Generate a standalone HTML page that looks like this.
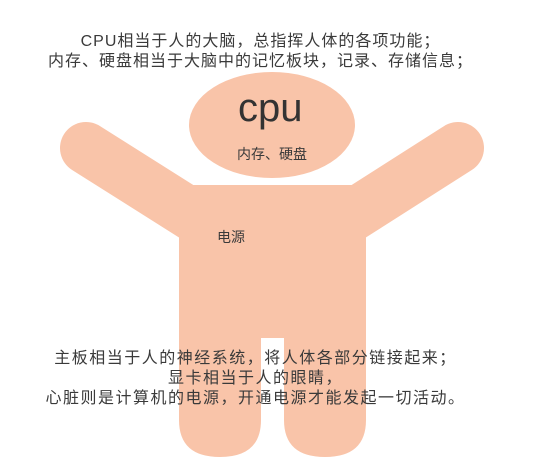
<!DOCTYPE html>
<html><head><meta charset="utf-8"><style>
html,body{margin:0;padding:0;background:#fff;}
body{width:533px;height:472px;position:relative;overflow:hidden;font-family:"Liberation Sans","Noto Sans CJK SC",sans-serif;color:#3a3a3a;}
.t{position:absolute;left:0;text-align:center;font-size:16px;letter-spacing:1px;line-height:20px;white-space:nowrap;}
.a{width:521px;}
.b{width:511px;letter-spacing:1.5px;}
</style></head><body>
<svg width="533" height="472" style="position:absolute;left:0;top:0">
<g fill="#f9c4a9" stroke="none">
<ellipse cx="272" cy="125" rx="83" ry="53"/>
<path d="M179 185 H366 V420 Q366 457 325 457 Q284 457 284 420 V338 H261 V420 Q261 457 220 457 Q179 457 179 420 Z"/>
</g>
<g stroke="#f9c4a9" stroke-width="52" stroke-linecap="round">
<line x1="86" y1="148" x2="200" y2="220"/>
<line x1="458" y1="148" x2="345" y2="220"/>
</g>
</svg>
<div class="t a" style="top:32px">CPU相当于人的大脑，总指挥人体的各项功能；</div>
<div class="t a" style="top:52px">内存、硬盘相当于大脑中的记忆板块，记录、存储信息；</div>
<div style="position:absolute;left:238px;top:86px;font-size:40px;color:#333;">cpu</div>
<div style="position:absolute;left:237px;top:144px;font-size:14px;">内存、硬盘</div>
<div style="position:absolute;left:217px;top:227px;font-size:14px;">电源</div>
<div class="t b" style="top:349px">主板相当于人的神经系统，将人体各部分链接起来；</div>
<div class="t b" style="top:369px">显卡相当于人的眼睛，</div>
<div class="t b" style="top:389px">心脏则是计算机的电源，开通电源才能发起一切活动。</div>
</body></html>
